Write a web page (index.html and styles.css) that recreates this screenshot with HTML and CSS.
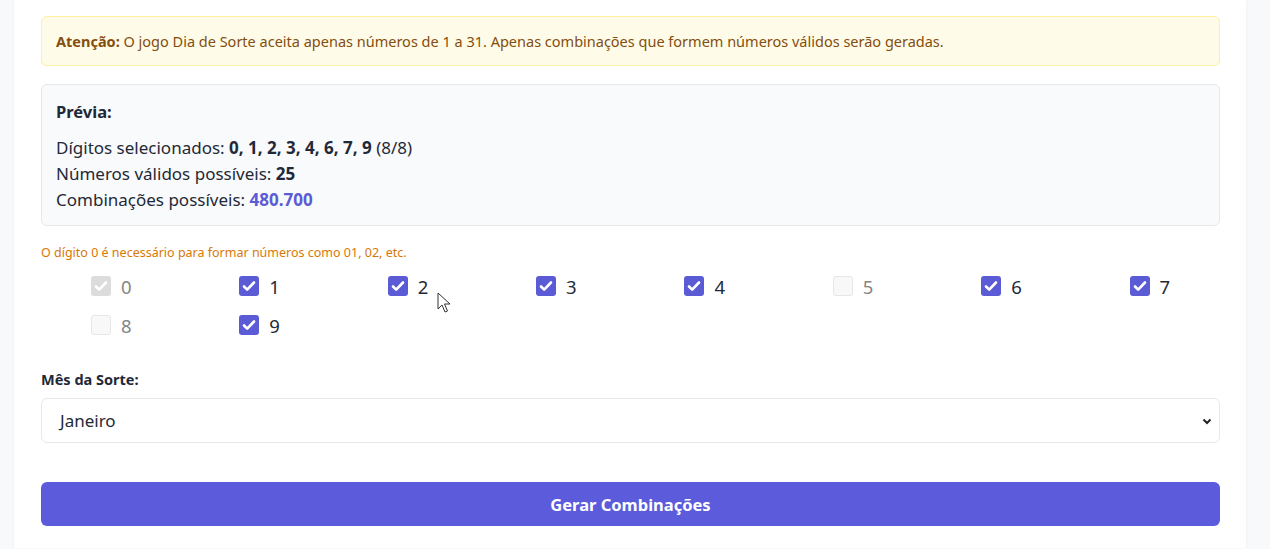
FILE: index.html
```html
<!DOCTYPE html>
<html>
<head>
    <title>Dia de Sorte - Gerador</title>
    <link rel="stylesheet" href="styles.css">
</head>
<body>
    <div class="card">
        <div class="warning">
            <strong>Atenção:</strong> O jogo Dia de Sorte aceita apenas números de 1 a 31. Apenas combinações que formem números válidos serão geradas.
        </div>

        <div class="preview">
            <h3>Prévia:</h3>
            <p>Dígitos selecionados: <strong>0, 1, 2, 3, 4, 6, 7, 9</strong> (8/8)</p>
            <p>Números válidos possíveis: <strong>25</strong></p>
            <p>Combinações possíveis: <strong class="accent">480.700</strong></p>
        </div>

        <p class="hint">O dígito 0 é necessário para formar números como 01, 02, etc.</p>

        <div class="digits">
            <label class="digit locked"><span class="box"><svg viewBox="0 0 20 20"><path d="M5 10.5l3.2 3.2L15 6.5"/></svg></span>0</label>
            <label class="digit on"><span class="box"><svg viewBox="0 0 20 20"><path d="M5 10.5l3.2 3.2L15 6.5"/></svg></span>1</label>
            <label class="digit on"><span class="box"><svg viewBox="0 0 20 20"><path d="M5 10.5l3.2 3.2L15 6.5"/></svg></span>2</label>
            <label class="digit on"><span class="box"><svg viewBox="0 0 20 20"><path d="M5 10.5l3.2 3.2L15 6.5"/></svg></span>3</label>
            <label class="digit on"><span class="box"><svg viewBox="0 0 20 20"><path d="M5 10.5l3.2 3.2L15 6.5"/></svg></span>4</label>
            <label class="digit off"><span class="box"></span>5</label>
            <label class="digit on"><span class="box"><svg viewBox="0 0 20 20"><path d="M5 10.5l3.2 3.2L15 6.5"/></svg></span>6</label>
            <label class="digit on"><span class="box"><svg viewBox="0 0 20 20"><path d="M5 10.5l3.2 3.2L15 6.5"/></svg></span>7</label>
            <label class="digit off"><span class="box"></span>8</label>
            <label class="digit on"><span class="box"><svg viewBox="0 0 20 20"><path d="M5 10.5l3.2 3.2L15 6.5"/></svg></span>9</label>
        </div>

        <label class="field-label" for="mes">Mês da Sorte:</label>
        <div class="select">
            <span>Janeiro</span>
            <svg viewBox="0 0 12 12"><path d="M2.5 4.5L6 8l3.5-3.5"/></svg>
        </div>

        <button class="generate">Gerar Combinações</button>
    </div>

    <svg class="cursor" viewBox="0 0 14 22"><path d="M1 1v16l4-4 3 7 2.5-1-3-7h5.5z"/></svg>
</body>
</html>
```

FILE: styles.css
```css
body
{
    margin: 0;
    background-color: #f8f9fa;
    font-family: "Noto Sans", "Open Sans", sans-serif;
    color: #1f2937;
}
.card
{
    margin: 0 24px 0 14px;
    padding: 16px 26px 22px 27px;
    background-color: #fff;
    box-shadow: 0 1px 3px rgba(0, 0, 0, 0.06);
}
.warning
{
    padding: 14px;
    background-color: #fefce8;
    border: 1px solid #fdf0a0;
    border-radius: 6px;
    color: #854d0e;
    font-size: 14.5px;
    line-height: 20px;
}
.preview
{
    margin-top: 18px;
    padding: 15px 14px 12px;
    background-color: #f9fafb;
    border: 1px solid #e5e7eb;
    border-radius: 6px;
    font-size: 17px;
}
.preview h3
{
    margin: 0 0 11px;
    font-size: 16.5px;
    line-height: 24px;
}
.preview p
{
    margin: 0;
    line-height: 26px;
}
.accent
{
    color: #5b5bd6;
}
.hint
{
    margin: 18px 0 0;
    font-size: 12.5px;
    line-height: 18px;
    color: #d97706;
}
.digits
{
    display: grid;
    grid-template-columns: repeat(8, 1fr);
    column-gap: 8px;
    row-gap: 9px;
    margin-top: 9px;
}
.digit
{
    display: flex;
    align-items: center;
    justify-content: center;
    gap: 10px;
    height: 30px;
    font-size: 18.5px;
    color: #1f2937;
}
.box
{
    width: 20px;
    height: 20px;
    border-radius: 3px;
    box-sizing: border-box;
}
.box svg
{
    width: 20px;
    height: 20px;
    fill: none;
    stroke: #fff;
    stroke-width: 2.6;
    stroke-linecap: round;
    stroke-linejoin: round;
}
.on .box
{
    background-color: #5b5bd6;
}
.locked .box
{
    background-color: #dcdcdc;
}
.locked, .off
{
    color: #858585;
}
.off .box
{
    background-color: #f8f8f8;
    border: 1px solid #e6e6e6;
}
.field-label
{
    display: block;
    margin-top: 29px;
    font-size: 14.5px;
    font-weight: bold;
    line-height: 20px;
}
.select
{
    display: flex;
    align-items: center;
    justify-content: space-between;
    margin-top: 9px;
    height: 45px;
    padding: 0 6px 0 18px;
    box-sizing: border-box;
    border: 1px solid #e5e7eb;
    border-radius: 6px;
    font-size: 17px;
}
.select svg
{
    width: 12px;
    height: 12px;
    fill: none;
    stroke: #222;
    stroke-width: 2;
}
.generate
{
    display: block;
    width: 100%;
    height: 44px;
    margin-top: 39px;
    border: none;
    border-radius: 6px;
    background-color: #5b5bdc;
    color: #fff;
    font-family: inherit;
    font-size: 16.5px;
    font-weight: bold;
}
.cursor
{
    position: absolute;
    left: 437px;
    top: 292px;
    width: 14px;
    height: 22px;
    fill: #fff;
    stroke: #333;
    stroke-width: 1;
}
```
